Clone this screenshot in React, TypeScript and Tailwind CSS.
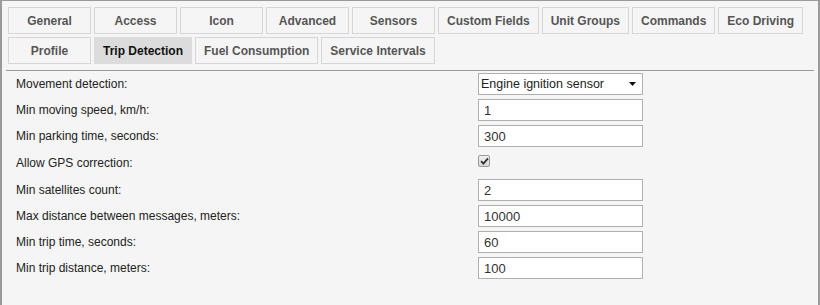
const topTabs = ['General', 'Access', 'Icon', 'Advanced', 'Sensors', 'Custom Fields', 'Unit Groups', 'Commands', 'Eco Driving'];
const bottomTabs = ['Profile', 'Trip Detection', 'Fuel Consumption', 'Service Intervals'];

const fields: { label: string; kind: 'select' | 'input' | 'check'; value?: string }[] = [
  { label: 'Movement detection:', kind: 'select', value: 'Engine ignition sensor' },
  { label: 'Min moving speed, km/h:', kind: 'input', value: '1' },
  { label: 'Min parking time, seconds:', kind: 'input', value: '300' },
  { label: 'Allow GPS correction:', kind: 'check' },
  { label: 'Min satellites count:', kind: 'input', value: '2' },
  { label: 'Max distance between messages, meters:', kind: 'input', value: '10000' },
  { label: 'Min trip time, seconds:', kind: 'input', value: '60' },
  { label: 'Min trip distance, meters:', kind: 'input', value: '100' },
];

function Tab({ name, active }: { name: string; active?: boolean }) {
  return (
    <div
      className={`h-[27px] min-w-[83px] px-[8px] flex items-center justify-center border text-[12px] font-bold whitespace-nowrap ${
        active ? 'bg-[#dcdcdc] border-[#dcdcdc] text-[#111]' : 'bg-[#f5f5f5] border-[#d6d6d6] text-[#555]'
      }`}
    >
      {name}
    </div>
  );
}

function Field({ kind, value }: { kind: 'select' | 'input' | 'check'; value?: string }) {
  if (kind === 'check') {
    return (
      <div className="h-[24px] flex items-start pt-[4px]">
        <div className="w-[12px] h-[12px] rounded-[2px] border border-[#9a9a9a] bg-gradient-to-b from-[#f0f0f0] to-[#d8d8d8] flex items-center justify-center">
          <svg width="9" height="8" viewBox="0 0 9 8">
            <path d="M1 4.2 L3.4 6.6 L8 1.4" fill="none" stroke="#333" strokeWidth="1.8" />
          </svg>
        </div>
      </div>
    );
  }
  if (kind === 'select') {
    return (
      <div className="h-[22px] w-[165px] border border-[#b0b0b0] bg-white flex items-center pl-[2px] pr-[6px] text-[12.5px] text-[#222]">
        <span className="flex-1">{value}</span>
        <svg width="7" height="4" viewBox="0 0 7 4">
          <path d="M0 0 L7 0 L3.5 4 Z" fill="#111" />
        </svg>
      </div>
    );
  }
  return (
    <input
      defaultValue={value}
      className="h-[22px] w-[165px] border border-[#b0b0b0] bg-white px-[5px] text-[13px] text-[#333] outline-none"
    />
  );
}

export default function App() {
  return (
    <div className="w-[820px] h-[305px] bg-[#f5f5f5] border-t border-x-2 border-[#9a9a9a] px-[4px] pt-[6px] font-['Liberation_Sans',Arial,sans-serif] overflow-hidden">
      <div className="flex flex-col gap-[3px] pl-[2px]">
        <div className="flex gap-[3px]">
          {topTabs.map(t => <Tab key={t} name={t} />)}
        </div>
        <div className="flex gap-[3px]">
          {bottomTabs.map(t => <Tab key={t} name={t} active={t === 'Trip Detection'} />)}
        </div>
      </div>

      <div className="mt-[6px] border-t border-[#9a9a9a] pt-[2px] pl-[10px]">
        <div className="flex flex-col gap-[4px]">
          {fields.map(f => (
            <div key={f.label} className="flex items-center">
              <div className="w-[462px] text-[12px] text-[#222]">{f.label}</div>
              <Field kind={f.kind} value={f.value} />
            </div>
          ))}
        </div>
      </div>
    </div>
  );
}
